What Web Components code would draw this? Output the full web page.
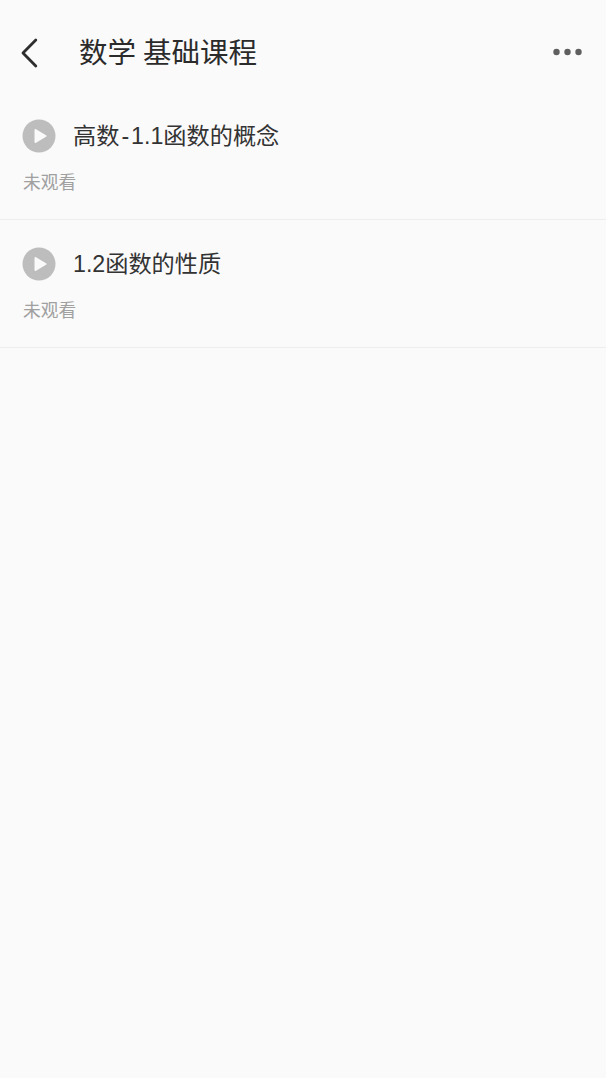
<!DOCTYPE html>
<html lang="zh">
<head>
<meta charset="utf-8">
<title>数学 基础课程</title>
<style>
    html, body {
        margin: 0;
        height: 100%;
        background: #fafafa;
        font-family: "Liberation Sans", "Noto Sans CJK SC", sans-serif;
    }
    .dash {
        padding: 0 2px;
    }
</style>
</head>
<body>
<course-header>数学 基础课程</course-header>
<course-list>
    <lesson-row status="未观看">高数<span class="dash">-</span>1.1函数的概念</lesson-row>
    <lesson-row status="未观看">1.2函数的性质</lesson-row>
</course-list>
<script>
var templateHeader = document.createElement("template")
templateHeader.innerHTML = `
<style>
    :host {
        display: flex;
        align-items: center;
        height: 92px;
        padding: 14px 24px 0 20px;
        box-sizing: border-box;
        color: #2b2b2b;
    }
    .back {
        width: 20px;
        height: 32px;
        display: block;
        flex: none;
    }
    .title {
        margin-left: 39px;
        flex: 1;
        font-size: 28.5px;
        word-spacing: -1px;
        line-height: 36px;
        white-space: nowrap;
    }
    .more {
        width: 30px;
        height: 8px;
        display: block;
        flex: none;
        margin-bottom: 2px;
    }
</style>
<svg class="back" viewBox="0 0 20 32" fill="none" stroke="#2e2e2e" stroke-width="2.8" stroke-linecap="round" stroke-linejoin="round">
    <path d="M15.8 3L3 16L15.8 29"/>
</svg>
<div class="title"><slot></slot></div>
<svg class="more" viewBox="0 0 30 8" fill="#5f5f5f">
    <circle cx="4.5" cy="4" r="3.2"/>
    <circle cx="15.5" cy="4" r="3.2"/>
    <circle cx="26.5" cy="4" r="3.2"/>
</svg>
`

class CourseHeader extends HTMLElement {
    constructor() {
        super()
        this.shadow = this.attachShadow({ mode: "open" })
        this.shadow.appendChild(templateHeader.content.cloneNode(true))
    }
}

var templateList = document.createElement("template")
templateList.innerHTML = `
<style>
    :host {
        display: flex;
        flex-direction: column;
    }
</style>
<slot></slot>
`

class CourseList extends HTMLElement {
    constructor() {
        super()
        this.shadow = this.attachShadow({ mode: "open" })
        this.shadow.appendChild(templateList.content.cloneNode(true))
    }
}

var templateRow = document.createElement("template")
templateRow.innerHTML = `
<style>
    :host {
        display: block;
        height: 128px;
        box-sizing: border-box;
        padding: 27px 0 0 22px;
        border-bottom: 1px solid #eeeeee;
    }
    .top {
        display: flex;
        align-items: center;
        gap: 17px;
        height: 33px;
    }
    .play {
        width: 34px;
        height: 34px;
        display: block;
        flex: none;
    }
    .name {
        font-size: 23.2px;
        line-height: 33px;
        padding-top: 1px;
        color: #333333;
        white-space: nowrap;
    }
    .status {
        margin: 19px 0 0 1px;
        font-size: 17.7px;
        line-height: 24px;
        color: #a0a0a0;
    }
</style>
<div class="top">
    <svg class="play" viewBox="0 0 34 34">
        <circle cx="17" cy="17" r="16.5" fill="#bdbdbd"/>
        <path d="M13.5 11L23.5 17L13.5 23Z" fill="#fafafa" stroke="#fafafa" stroke-width="2" stroke-linejoin="round"/>
    </svg>
    <div class="name"><slot></slot></div>
</div>
<div class="status"></div>
`

class LessonRow extends HTMLElement {
    static get observedAttributes() {
        return ["status"]
    }

    constructor() {
        super()
        this.shadow = this.attachShadow({ mode: "open" })
        this.shadow.appendChild(templateRow.content.cloneNode(true))
    }

    connectedCallback() {
        this.render()
    }

    attributeChangedCallback() {
        this.render()
    }

    render() {
        this.shadow.querySelector(".status").textContent = this.getAttribute("status") || ""
    }
}

window.customElements.define("course-header", CourseHeader)
window.customElements.define("course-list", CourseList)
window.customElements.define("lesson-row", LessonRow)
</script>
</body>
</html>
